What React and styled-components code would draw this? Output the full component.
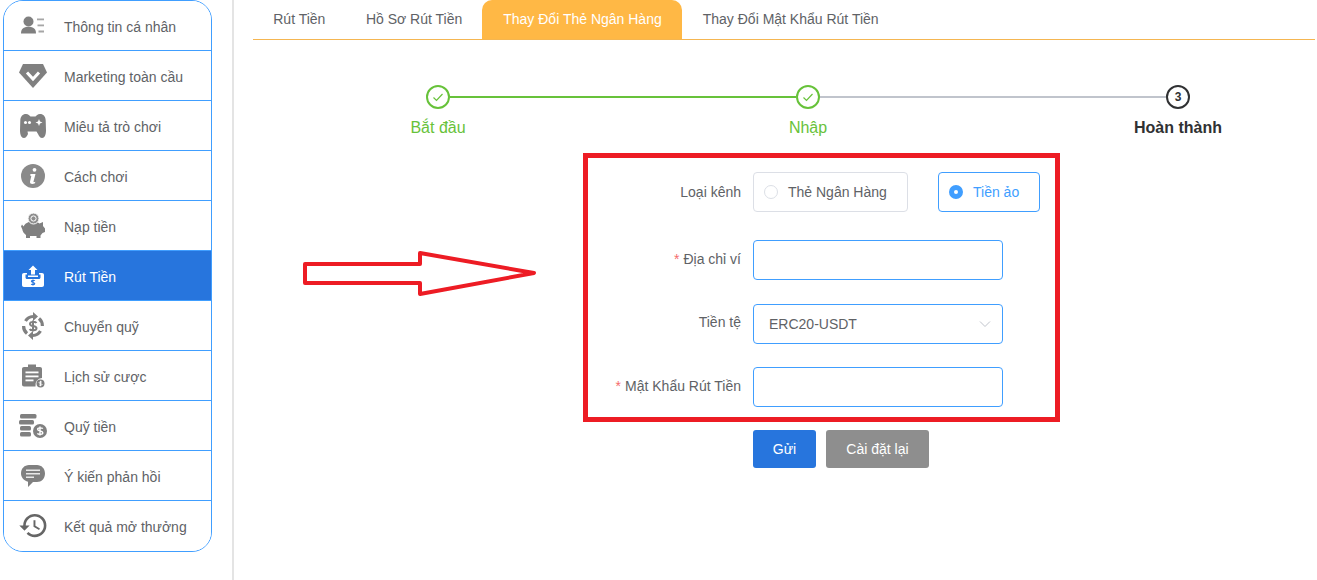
import React from "react"
import styled, { createGlobalStyle } from "styled-components"
import { MdHistory } from "react-icons/md"

const GlobalStyle = createGlobalStyle`
    html, body {
        margin: 0;
        padding: 0;
        background: #fff;
        overflow: hidden;
    }
    body {
        font-family: "Liberation Sans", Arial, sans-serif;
        color: #606266;
    }
`

const Page = styled.div`
    display: flex;
    width: 1317px;
    height: 580px;
    overflow: hidden;
`

const Aside = styled.aside`
    flex: 0 0 234px;
    box-sizing: border-box;
    padding-left: 3px;
    border-right: 2px solid #e4e4e4;
`

const Menu = styled.ul`
    box-sizing: border-box;
    width: 209px;
    margin: 0;
    padding: 0;
    list-style: none;
    border: 1px solid #409eff;
    border-radius: 20px;
    overflow: hidden;
`

const MenuItem = styled.li`
    box-sizing: border-box;
    display: flex;
    align-items: center;
    height: 50px;
    padding-left: 14px;
    padding-top: 3px;
    border-bottom: 1px solid #409eff;
    font-size: 14px;
    color: ${(p) => (p.$active ? "#fff" : "#606266")};
    background: ${(p) => (p.$active ? "#2775dd" : "#fff")};
    &:last-child {
        border-bottom: 0;
        padding-top: 2px;
    }
`

const IconBox = styled.span`
    flex: 0 0 28px;
    min-width: 0;
    height: 28px;
    margin: -3px 17px 0 1px;
    display: flex;
    align-items: center;
    justify-content: center;
    color: ${(p) => (p.$active ? "#fff" : "#808080")};
`

const Main = styled.main`
    position: relative;
    flex: 1;
    padding-left: 19px;
`

const Tabs = styled.nav`
    display: flex;
    box-sizing: border-box;
    width: 1062px;
    height: 40px;
    border-bottom: 1px solid #f5b651;
`

const Tab = styled.div`
    padding: 0 ${(p) => (p.$active ? "20.75px" : "20.25px")};
    height: 39px;
    line-height: 39px;
    font-size: 14px;
    border-radius: 10px 10px 0 0;
    color: ${(p) => (p.$active ? "#fff" : "#606266")};
    background: ${(p) => (p.$active ? "#ffb845" : "transparent")};
`

const Steps = styled.div`
    display: flex;
    width: 1110px;
    margin-top: 45px;
`

const Step = styled.div`
    position: relative;
    flex: 0 0 370px;
    display: flex;
    flex-direction: column;
    align-items: center;
    color: ${(p) => (p.$done ? "#67c23a" : "#303133")};
    &:not(:last-child)::after {
        content: "";
        position: absolute;
        top: 11px;
        left: 197px;
        width: 346px;
        height: 2px;
        background: ${(p) => (p.$lineDone ? "#67c23a" : "#c0c4cc")};
    }
`

const StepDot = styled.div`
    box-sizing: border-box;
    width: 24px;
    height: 24px;
    border: 2px solid currentColor;
    border-radius: 50%;
    display: flex;
    align-items: center;
    justify-content: center;
    font-size: 12px;
    font-weight: 700;
`

const StepTitle = styled.div`
    margin-top: 9px;
    font-size: 16px;
    line-height: 19px;
    font-weight: ${(p) => (p.$bold ? 700 : 400)};
`

const Annotation = styled.svg`
    position: absolute;
    left: 69px;
    top: 250px;
`

const FormFrame = styled.form`
    box-sizing: border-box;
    width: 477px;
    height: 269px;
    margin: 16px 0 0 330px;
    padding: 14px 0 0 0;
    border: 5px solid #ed1c24;
`

const Row = styled.div`
    display: flex;
    align-items: center;
    height: 40px;
    margin-bottom: ${(p) => p.$gap}px;
`

const Label = styled.label`
    flex: 0 0 165px;
    padding-right: 12px;
    box-sizing: border-box;
    text-align: right;
    font-size: 14px;
    margin-top: ${(p) => p.$shift || 0}px;
    white-space: nowrap;
`

const Star = styled.span`
    color: #f56c6c;
    margin-right: 4px;
`

const RadioCard = styled.div`
    box-sizing: border-box;
    flex: none;
    display: flex;
    align-items: center;
    width: ${(p) => p.$width}px;
    height: 40px;
    padding-left: 10px;
    border: 1px solid ${(p) => (p.$on ? "#409eff" : "#dcdfe6")};
    border-radius: 4px;
    font-size: 14px;
    color: ${(p) => (p.$on ? "#409eff" : "#606266")};
    & + & {
        margin-left: 30px;
    }
`

const RadioDot = styled.span`
    box-sizing: border-box;
    width: 14px;
    height: 14px;
    margin-right: 10px;
    border-radius: 50%;
    border: ${(p) => (p.$on ? "5px solid #409eff" : "1px solid #dcdfe6")};
    background: #fff;
`

const Field = styled.div`
    box-sizing: border-box;
    display: flex;
    align-items: center;
    justify-content: space-between;
    width: 250px;
    height: 40px;
    padding: 0 11px 0 15px;
    border: 1px solid #409eff;
    border-radius: 4px;
    font-size: 14px;
    color: #606266;
`

const Buttons = styled.div`
    display: flex;
    gap: 10px;
    margin: 8px 0 0 500px;
`

const Button = styled.button`
    height: 38px;
    width: ${(p) => p.$width}px;
    padding: 0;
    border: 0;
    border-radius: 3px;
    font: 14px "Liberation Sans", Arial, sans-serif;
    color: #fff;
    background: ${(p) => p.$bg};
`

const EdgeLine = styled.div`
    position: absolute;
    right: 0;
    top: 0;
    width: 2px;
    height: 489px;
    background: #f2f2f2;
`

const Svg = ({ children }) => (
    <svg width="28" height="28" viewBox="0 0 28 28" fill="currentColor">{children}</svg>
)

const PersonIcon = () => (
    <Svg>
        <circle cx="9.500" cy="9.500" r="5" />
        <path d="M2 21.500c0-4.500 2.500-6.700 7.500-6.700s7.500 2.200 7.500 6.700z" />
        <rect x="18" y="6.500" width="7" height="1.800" fill="#a6a6a6" />
        <rect x="18.500" y="12.500" width="6.500" height="1.800" fill="#a6a6a6" />
        <rect x="19.500" y="18.500" width="5.500" height="2" fill="#a6a6a6" />
    </Svg>
)

const DiamondIcon = () => (
    <Svg>
        <path d="M4 2h20l4 8.500L14 26 0 10.500z" />
        <path d="M8 10.500l6 6.500 6-6.500" fill="none" stroke="#fff" strokeWidth="3" />
    </Svg>
)

const GamepadIcon = () => (
    <Svg>
        <path d="M7 2c2.500 0 3.500 1.500 4.500 2.500h5c1-1 2-2.500 4.500-2.500 3.500 0 5.500 2.500 5.700 6.500l.3 10c0 4.500-1.500 7.500-3.800 7.500-2.200 0-3.200-2-4.200-4l-1.500-2.500h-9L9 22c-1 2-2 4-4.200 4C2.500 26 1 23 1 18.500l.3-10C1.500 4.500 3.500 2 7 2z" />
        <circle cx="6.500" cy="10.500" r="1.500" fill="#fff" />
        <circle cx="10.500" cy="10.500" r="1.500" fill="#fff" />
        <path d="M20 7l1 2.500 2.500 1-2.500 1-1 2.500-1-2.500-2.500-1 2.500-1z" fill="#fff" />
    </Svg>
)

const InfoIcon = () => (
    <Svg>
        <circle cx="14" cy="14" r="12" fill="#8a8a8a" />
        <circle cx="15.500" cy="7.800" r="1.900" fill="#fff" />
        <path d="M11.500 12h5l-2 7.500c-.2.800.5 1 1.800.3l-.3 1.500c-2.500 1.200-5.200 1-5-1.500l1.300-5.800-1.200-.4z" fill="#fff" />
    </Svg>
)

const PiggyIcon = () => (
    <Svg>
        <path d="M3 12.500l1.500 2C6 11.500 9 9.500 14 9.500c3 0 5 .7 6.500 2l3.500-1.500v4l2 2.500v3.500l-2.500 1-2 2.500V26h-4v-2h-6.500v2h-4v-3c-2-1.500-3.500-3.500-3.800-6L2 14.500z" />
        <circle cx="14.500" cy="6.500" r="5.500" fill="#8f8f8f" stroke="#fff" strokeWidth="1" />
        <circle cx="14.500" cy="6.500" r="2.600" fill="none" stroke="#fff" strokeWidth="1" />
    </Svg>
)

const UploadIcon = () => (
    <Svg>
        <path d="M14 3.500l4.500 4.500H16v4.500h-4V8H9.500z" />
        <rect x="9" y="13.500" width="10" height="1.500" />
        <path d="M5 11h3v1.500H6.500v3c0 .8.7 1.500 1.500 1.500h12c.8 0 1.500-.7 1.500-1.500v-3H20V11h3c1.200 0 2 .8 2 2v10c0 1.200-.8 2-2 2H5c-1.200 0-2-.8-2-2V13c0-1.200.8-2 2-2z" />
        <path d="M15.800 18.800c-.5-.8-3.400-.9-3.400.5 0 1.500 3.400.8 3.400 2.300 0 1.400-3 1.300-3.600.4M14 17.500v6" fill="none" stroke="#2775dd" strokeWidth="1.100" />
    </Svg>
)

const TransferIcon = () => (
    <Svg>
        <path d="M6.500 9A9.500 9.500 0 0 1 14 4.500M21.500 19a9.500 9.500 0 0 1-7.500 4.500M4.600 14A9.500 9.500 0 0 0 8 21.500M23.400 14A9.500 9.500 0 0 0 20 6.500" fill="none" stroke="currentColor" strokeWidth="3.200" />
        <path d="M14 0l5 4.500-5 4.500zM14 28l-5-4.500 5-4.500z" />
        <path d="M17.500 11c-.9-1.500-6.500-1.800-6.500.9 0 3 6.500 1.400 6.500 4.300 0 2.800-6 2.500-6.800.8M14 8.500v11" fill="none" stroke="currentColor" strokeWidth="2" />
    </Svg>
)

const ClipboardIcon = () => (
    <Svg>
        <path d="M5 5h4V2.500h8V5h4c1.200 0 2 .8 2 2v9a7 7 0 0 0-6.500 8.500H5c-1.200 0-2-.8-2-2V7c0-1.200.8-2 2-2z" />
        <rect x="6.500" y="9.500" width="13" height="1.800" fill="#fff" />
        <rect x="6.500" y="13.500" width="13" height="1.800" fill="#fff" />
        <rect x="6.500" y="17.500" width="8" height="1.800" fill="#fff" />
        <circle cx="21.500" cy="21.500" r="4" />
        <path d="M23 20.300c-.4-.6-2.900-.7-2.900.4 0 1.200 2.900.6 2.900 1.700 0 1.200-2.500 1.100-3 .4M21.500 18.800v5.400" fill="none" stroke="#fff" strokeWidth=".9" />
    </Svg>
)

const CoinsIcon = () => (
    <Svg>
        <rect x="1" y="2" width="16.500" height="4.500" rx="1.500" />
        <rect x="0" y="8" width="15" height="4.500" rx="1.500" />
        <rect x="1" y="14" width="11" height="4.500" rx="1.500" />
        <rect x="1" y="20" width="11" height="4.500" rx="1.500" />
        <circle cx="21" cy="19" r="7" />
        <path d="M23.800 16.700c-.8-1.100-5.200-1.300-5.200.6 0 2.300 5.200 1.100 5.200 3.400 0 2.100-4.600 2-5.400.7M21 14.500v9" fill="none" stroke="#fff" strokeWidth="1.400" />
    </Svg>
)

const ChatIcon = () => (
    <Svg>
        <path d="M10 3h8c4.500 0 8 3.500 8 8.500S22.500 20 18 20h-4l-5 5v-5.300C5 18.800 2 15.500 2 11.500 2 6.500 5.500 3 10 3z" />
        <rect x="7" y="7.500" width="14" height="1.500" fill="#e8e8e8" />
        <rect x="7" y="11" width="14" height="1.500" fill="#e8e8e8" />
        <rect x="7" y="14.500" width="8" height="1.500" fill="#e8e8e8" />
    </Svg>
)

const HistoryIcon = styled(MdHistory)`
    flex: none;
    color: #666;
`

const menu = [
    ["Thông tin cá nhân", <PersonIcon />],
    ["Marketing toàn cầu", <DiamondIcon />],
    ["Miêu tả trò chơi", <GamepadIcon />],
    ["Cách chơi", <InfoIcon />],
    ["Nạp tiền", <PiggyIcon />],
    ["Rút Tiền", <UploadIcon />, true],
    ["Chuyển quỹ", <TransferIcon />],
    ["Lịch sử cược", <ClipboardIcon />],
    ["Quỹ tiền", <CoinsIcon />],
    ["Ý kiến phản hồi", <ChatIcon />],
    ["Kết quả mở thưởng", <HistoryIcon size={31} />],
]

const tabs = ["Rút Tiền", "Hồ Sơ Rút Tiền", "Thay Đổi Thẻ Ngân Hàng", "Thay Đổi Mật Khẩu Rút Tiền"]

const Check = () => (
    <svg width="14" height="14" viewBox="0 0 14 14" fill="none" stroke="currentColor" strokeWidth="1.200">
        <path d="M2.500 7.500l3 3 6-6.500" />
    </svg>
)

const App = () => {
    return (
        <Page>
            <GlobalStyle />
            <Aside>
                <Menu>
                    {menu.map(([label, icon, active]) => (
                        <MenuItem key={label} $active={active}>
                            <IconBox $active={active}>{icon}</IconBox>
                            {label}
                        </MenuItem>
                    ))}
                </Menu>
            </Aside>
            <Main>
                <Tabs>
                    {tabs.map((t, i) => (
                        <Tab key={t} $active={i === 2}>{t}</Tab>
                    ))}
                </Tabs>
                <Steps>
                    <Step $done $lineDone>
                        <StepDot><Check /></StepDot>
                        <StepTitle>Bắt đầu</StepTitle>
                    </Step>
                    <Step $done>
                        <StepDot><Check /></StepDot>
                        <StepTitle>Nhập</StepTitle>
                    </Step>
                    <Step>
                        <StepDot>3</StepDot>
                        <StepTitle $bold>Hoàn thành</StepTitle>
                    </Step>
                </Steps>
                <Annotation width="240" height="50" viewBox="0 0 240 50">
                    <path d="M2 14H117V3L231 23 117 44V33H2z" fill="none" stroke="#ed1c24" strokeWidth="4" strokeLinejoin="round" />
                </Annotation>
                <FormFrame>
                    <Row $gap={28}>
                        <Label $shift={-1}>Loại kênh</Label>
                        <RadioCard $width={155}><RadioDot />Thẻ Ngân Hàng</RadioCard>
                        <RadioCard $width={102} $on><RadioDot $on />Tiền ảo</RadioCard>
                    </Row>
                    <Row $gap={24}>
                        <Label $shift={-2}><Star>*</Star>Địa chỉ ví</Label>
                        <Field />
                    </Row>
                    <Row $gap={23}>
                        <Label $shift={-4}>Tiền tệ</Label>
                        <Field>
                            ERC20-USDT
                            <svg width="12" height="12" viewBox="0 0 12 12" fill="none" stroke="#c0c4cc" strokeWidth="1">
                                <path d="M1 3.500l5 5 5-5" />
                            </svg>
                        </Field>
                    </Row>
                    <Row $gap={0}>
                        <Label $shift={-3}><Star>*</Star>Mật Khẩu Rút Tiền</Label>
                        <Field />
                    </Row>
                </FormFrame>
                <Buttons>
                    <Button type="button" $width={63} $bg="#2775dd">Gửi</Button>
                    <Button type="button" $width={103} $bg="#8e8e8e">Cài đặt lại</Button>
                </Buttons>
                <EdgeLine />
            </Main>
        </Page>
    )
}

export default App
